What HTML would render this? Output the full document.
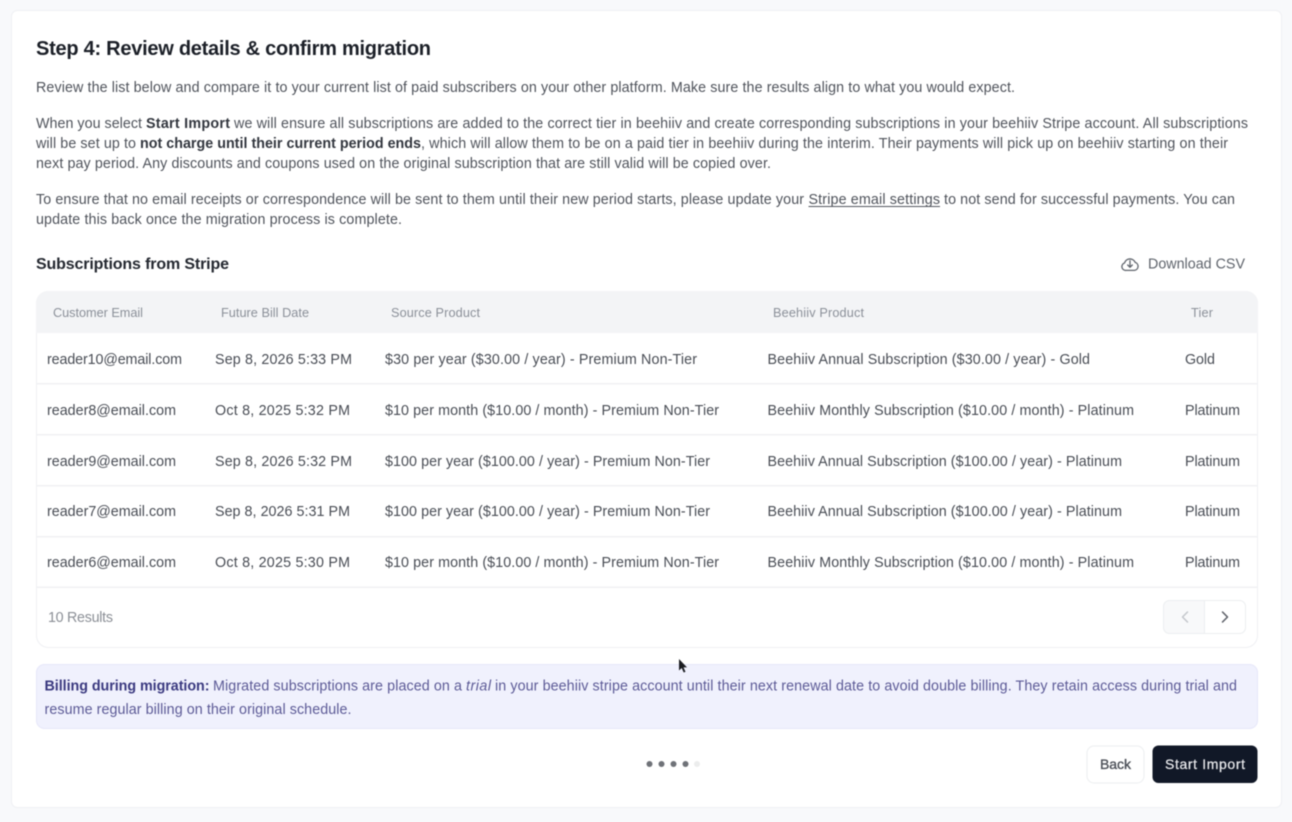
<!DOCTYPE html>
<html lang="en"><head><meta charset="utf-8"><title>Step 4: Review details &amp; confirm migration</title>
<style>
html,body{margin:0;padding:0;width:1292px;height:822px;overflow:hidden;background:#f8f9fb}
svg{display:block;filter:blur(.55px)}
text{font-family:"Liberation Sans",sans-serif;font-size:14.3px;fill:#50545c;white-space:pre}
.b{font-weight:700;fill:#33373f}
.t{fill:#494d55;font-size:14.3px}
.h{fill:#8b9099;font-size:12.7px}
.v{fill:#5c5a96;font-size:14.3px}
</style></head><body>
<svg width="1292" height="822" viewBox="0 0 1292 822" xmlns="http://www.w3.org/2000/svg">
<rect width="1292" height="822" fill="#f8f9fb"/>
<rect x="11.5" y="10.5" width="1270" height="797" rx="6" fill="#fff" stroke="#eff0f3"/>

<text x="36" y="55" textLength="395" style="font-size:20px;font-weight:700;fill:#1c2028">Step 4: Review details &amp; confirm migration</text>

<text x="36" y="92" textLength="979">Review the list below and compare it to your current list of paid subscribers on your other platform. Make sure the results align to what you would expect.</text>

<text x="36" y="128" textLength="106">When you select</text>
<text class="b" x="146" y="128" textLength="84">Start Import</text>
<text x="234" y="128" textLength="1014">we will ensure all subscriptions are added to the correct tier in beehiiv and create corresponding subscriptions in your beehiiv Stripe account. All subscriptions</text>
<text x="36" y="148" textLength="100">will be set up to</text>
<text class="b" x="140" y="148" textLength="281">not charge until their current period ends</text>
<text x="421" y="148" textLength="807">, which will allow them to be on a paid tier in beehiiv during the interim. Their payments will pick up on beehiiv starting on their</text>
<text x="36" y="168" textLength="735">next pay period. Any discounts and coupons used on the original subscription that are still valid will be copied over.</text>

<text x="36" y="204" textLength="768">To ensure that no email receipts or correspondence will be sent to them until their new period starts, please update your</text>
<text x="808.500" y="204" textLength="131.500">Stripe email settings</text>
<rect x="808.500" y="206" width="131.500" height="1" fill="#52565e"/>
<text x="944" y="204" textLength="291">to not send for successful payments. You can</text>
<text x="36" y="224" textLength="366">update this back once the migration process is complete.</text>

<text x="36" y="269" textLength="193" style="font-size:16px;font-weight:700;fill:#252931">Subscriptions from Stripe</text>

<g fill="none" stroke="#5f646c" stroke-width="1.300" stroke-linecap="round" stroke-linejoin="round">
<path d="M1126 270.400h8.200a4.100 4.100 0 0 0 1-8 5.700 5.700 0 0 0-10.700.6 3.800 3.800 0 0 0 1.500 7.400z"/>
<path d="M1130 260.800v6.300M1127.700 265l2.300 2.300 2.300-2.300"/>
</g>
<text x="1148" y="268.500" textLength="97" style="fill:#5f646c;font-size:14.300px">Download CSV</text>

<!-- table -->
<rect x="36.500" y="291.500" width="1221" height="356" rx="12" fill="#fff" stroke="#eff0f3"/>
<path d="M36 333v-30a12 12 0 0 1 12-12h1198a12 12 0 0 1 12 12v30z" fill="#f3f4f6"/>
<text class="h" x="53" y="317" textLength="90">Customer Email</text>
<text class="h" x="221" y="317" textLength="88">Future Bill Date</text>
<text class="h" x="391" y="317" textLength="89">Source Product</text>
<text class="h" x="773" y="317" textLength="91">Beehiiv Product</text>
<text class="h" x="1191" y="317" textLength="22">Tier</text>

<g fill="#f0f1f3">
<rect x="37" y="383" width="1220" height="1.500"/>
<rect x="37" y="434" width="1220" height="1.500"/>
<rect x="37" y="485" width="1220" height="1.500"/>
<rect x="37" y="536" width="1220" height="1.500"/>
<rect x="37" y="586.500" width="1220" height="1.500"/>
</g>

<text class="t" x="47" y="364" textLength="135">reader10@email.com</text>
<text class="t" x="215" y="364" textLength="137">Sep 8, 2026 5:33 PM</text>
<text class="t" x="385" y="364" textLength="312">$30 per year ($30.00 / year) - Premium Non-Tier</text>
<text class="t" x="767.500" y="364" textLength="322.500">Beehiiv Annual Subscription ($30.00 / year) - Gold</text>
<text class="t" x="1185" y="364" textLength="30">Gold</text>

<text class="t" x="47" y="415" textLength="129">reader8@email.com</text>
<text class="t" x="215" y="415" textLength="135">Oct 8, 2025 5:32 PM</text>
<text class="t" x="385" y="415" textLength="334">$10 per month ($10.00 / month) - Premium Non-Tier</text>
<text class="t" x="767.500" y="415" textLength="366.500">Beehiiv Monthly Subscription ($10.00 / month) - Platinum</text>
<text class="t" x="1185" y="415" textLength="55">Platinum</text>

<text class="t" x="47" y="466" textLength="129">reader9@email.com</text>
<text class="t" x="215" y="466" textLength="137">Sep 8, 2026 5:32 PM</text>
<text class="t" x="385" y="466" textLength="325">$100 per year ($100.00 / year) - Premium Non-Tier</text>
<text class="t" x="767.500" y="466" textLength="354.500">Beehiiv Annual Subscription ($100.00 / year) - Platinum</text>
<text class="t" x="1185" y="466" textLength="55">Platinum</text>

<text class="t" x="47" y="516" textLength="129">reader7@email.com</text>
<text class="t" x="215" y="516" textLength="135">Sep 8, 2026 5:31 PM</text>
<text class="t" x="385" y="516" textLength="325">$100 per year ($100.00 / year) - Premium Non-Tier</text>
<text class="t" x="767.500" y="516" textLength="354.500">Beehiiv Annual Subscription ($100.00 / year) - Platinum</text>
<text class="t" x="1185" y="516" textLength="55">Platinum</text>

<text class="t" x="47" y="567" textLength="129">reader6@email.com</text>
<text class="t" x="215" y="567" textLength="135">Oct 8, 2025 5:30 PM</text>
<text class="t" x="385" y="567" textLength="334">$10 per month ($10.00 / month) - Premium Non-Tier</text>
<text class="t" x="767.500" y="567" textLength="366.500">Beehiiv Monthly Subscription ($10.00 / month) - Platinum</text>
<text class="t" x="1185" y="567" textLength="55">Platinum</text>

<text x="48" y="622" textLength="65" style="fill:#8b8f96">10 Results</text>

<!-- pager -->
<path d="M1204.500 600.500h-35a6 6 0 0 0-6 6v21a6 6 0 0 0 6 6h35z" fill="#f8f9fa" stroke="#eceef0"/>
<path d="M1204.500 600.500h35a6 6 0 0 1 6 6v21a6 6 0 0 1-6 6h-35z" fill="#fff" stroke="#eceef0"/>
<path d="M1187.500 612l-5 5 5 5" fill="none" stroke="#c4c7cc" stroke-width="1.500" stroke-linecap="round" stroke-linejoin="round"/>
<path d="M1222.500 612l5 5-5 5" fill="none" stroke="#5a5e66" stroke-width="1.500" stroke-linecap="round" stroke-linejoin="round"/>

<!-- notice -->
<rect x="36.500" y="664.500" width="1221" height="64" rx="8" fill="#f0f1fd" stroke="#e6e7f9"/>
<text x="44.500" y="690.500" textLength="165" style="font-weight:700;fill:#3b3a80">Billing during migration:</text>
<text class="v" x="213" y="690.500" textLength="249">Migrated subscriptions are placed on a</text>
<text class="v" x="466" y="690.500" textLength="25" style="font-style:italic">trial</text>
<text class="v" x="495" y="690.500" textLength="742">in your beehiiv stripe account until their next renewal date to avoid double billing. They retain access during trial and</text>
<text class="v" x="44.500" y="714" textLength="307">resume regular billing on their original schedule.</text>

<!-- cursor -->
<path d="M679 659v11.500l2.700-2.500 2 4.500 1.800-.8-2-4.300h3.500z" fill="#1b1d22"/>

<!-- dots -->
<g fill="#6f7278">
<circle cx="649.500" cy="764" r="3"/><circle cx="661.500" cy="764" r="3"/><circle cx="673.500" cy="764" r="3"/><circle cx="685.500" cy="764" r="3"/>
</g>
<circle cx="697" cy="764" r="3" fill="#eceded"/>

<!-- buttons -->
<rect x="1087" y="746" width="57" height="37" rx="7" fill="#fff" stroke="#eceef0"/>
<text x="1100" y="769" textLength="31" style="fill:#4b4f57;font-size:14px;stroke:#4b4f57;stroke-width:.35px">Back</text>
<rect x="1152.500" y="745.500" width="105" height="37.500" rx="6" fill="#111827"/>
<text x="1165" y="769" textLength="80" style="fill:#e8e9ec;font-size:14px;stroke:#e8e9ec;stroke-width:.25px">Start Import</text>
</svg>
</body></html>
